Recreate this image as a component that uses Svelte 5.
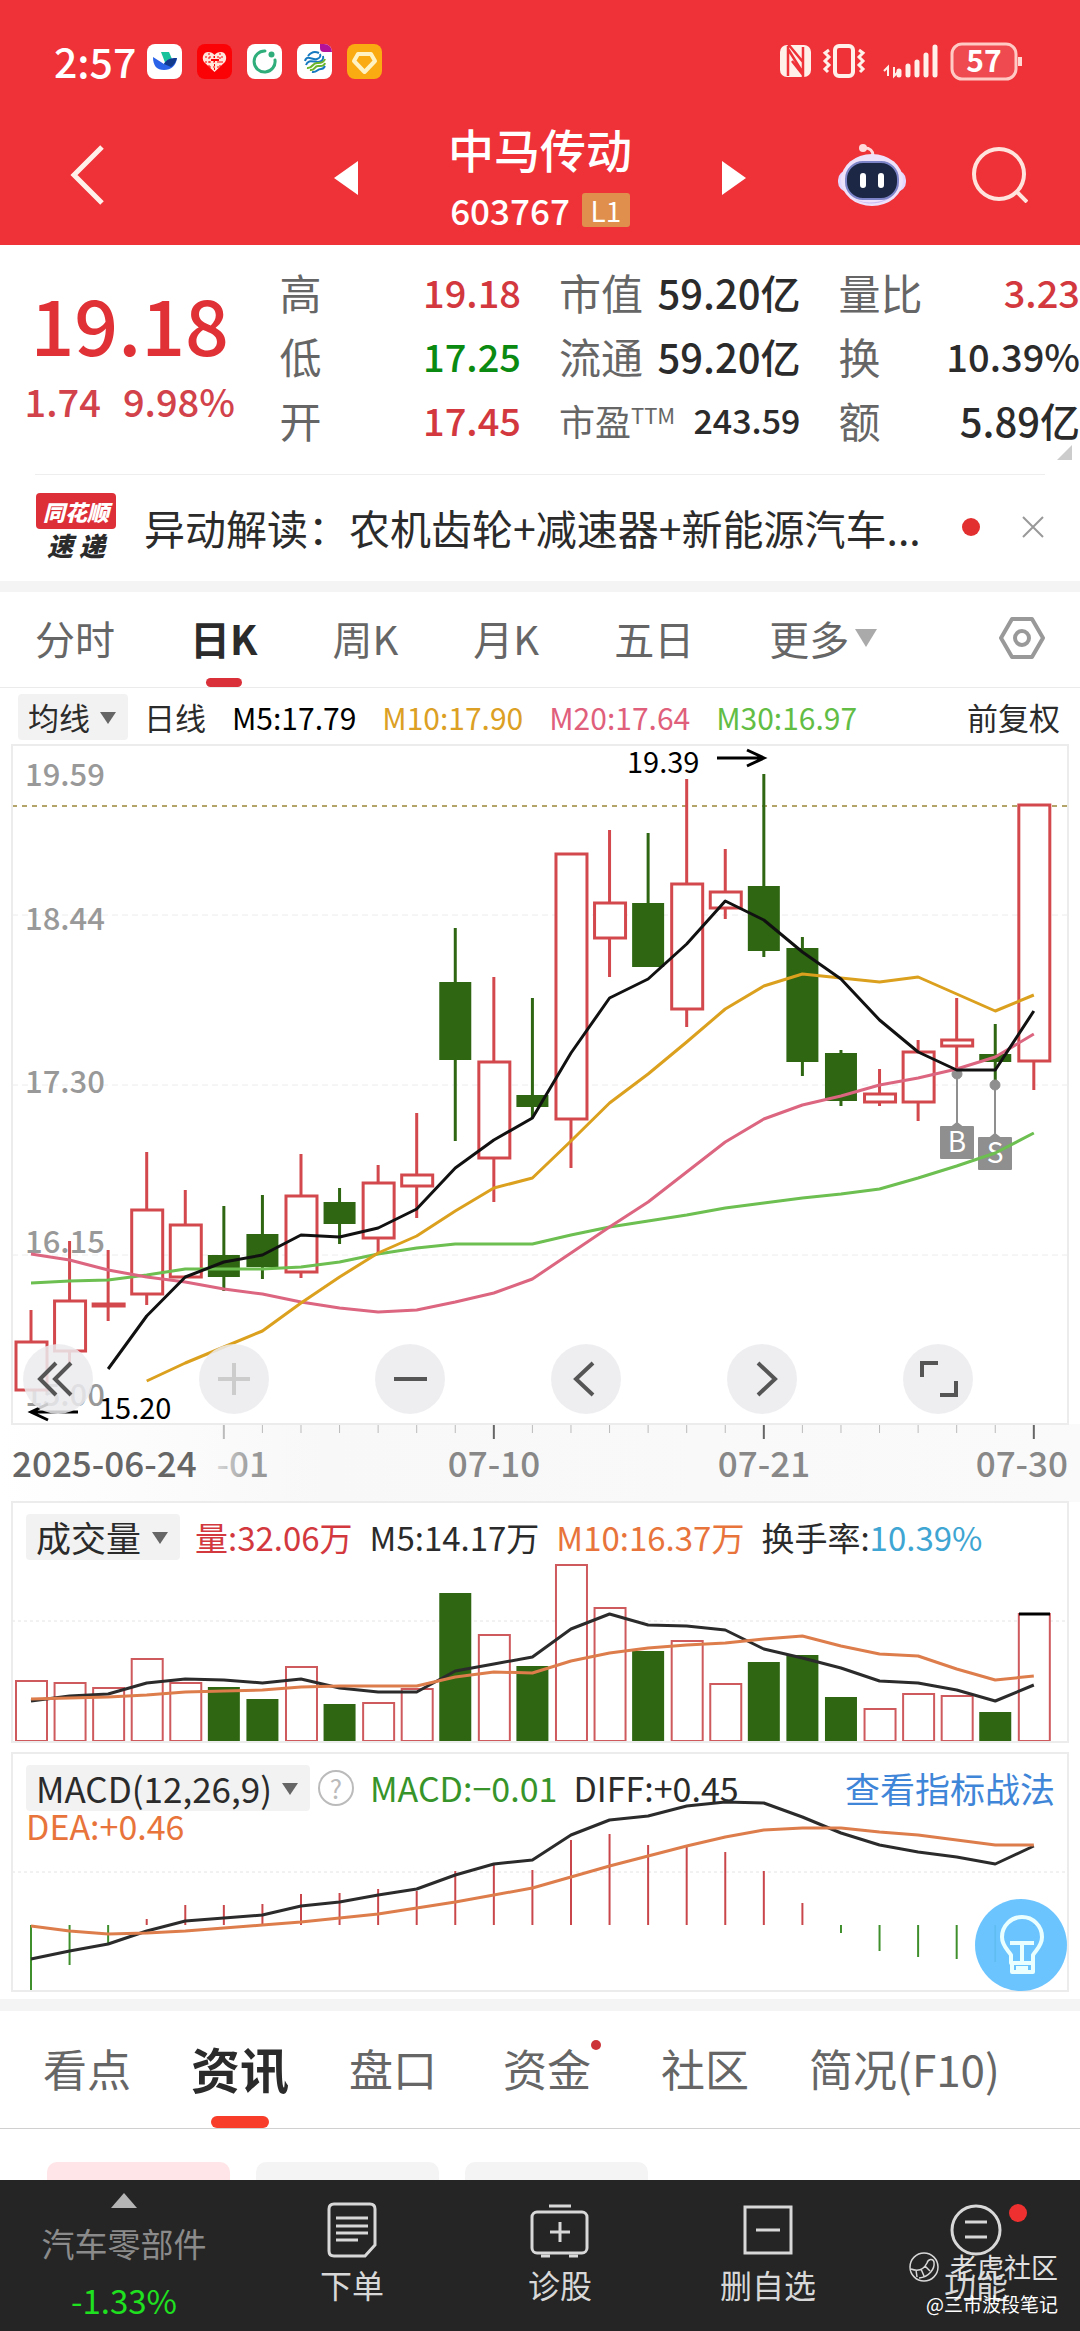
<script>
    const step = 38.57;
    const cx = (i) => 19 + i * step;

    // high, body top, body bottom, low, direction
    const candles = [
        [565, 597, 645, 645, 'up'],
        [496, 556, 606, 620, 'up'],
        [505, 559, 561, 576, 'up'],
        [407, 465, 549, 560, 'up'],
        [445, 480, 532, 532, 'up'],
        [461, 510, 532, 546, 'down'],
        [450, 489, 522, 534, 'down'],
        [409, 451, 527, 533, 'up'],
        [443, 457, 479, 499, 'down'],
        [420, 438, 493, 508, 'up'],
        [368, 430, 441, 473, 'up'],
        [183, 237, 315, 396, 'down'],
        [232, 317, 413, 457, 'up'],
        [253, 350, 362, 372, 'down'],
        [109, 109, 374, 423, 'up'],
        [85, 158, 193, 232, 'up'],
        [88, 158, 222, 222, 'down'],
        [34, 139, 264, 282, 'up'],
        [104, 147, 163, 174, 'up'],
        [29, 141, 206, 212, 'down'],
        [192, 203, 317, 331, 'down'],
        [305, 308, 356, 361, 'down'],
        [324, 349, 357, 361, 'up'],
        [295, 307, 357, 376, 'up'],
        [253, 295, 301, 323, 'up'],
        [279, 309, 317, 339, 'down'],
        [60, 60, 316, 345, 'up']
    ];
    const ma5 = [624, 571, 532, 517, 510, 490, 492, 483, 464, 423, 395, 373, 308, 253, 234, 199, 156, 175, 207, 234, 275, 307, 325, 325, 266];
    const ma10 = [636, 618, 602, 586, 558, 532, 508, 491, 466, 443, 433, 396, 358, 329, 297, 264, 241, 229, 233, 237, 232, 249, 266, 250];
    const ma20 = [509, 515, 525, 532, 537, 544, 549, 557, 563, 567, 565, 557, 548, 534, 508, 482, 457, 427, 397, 374, 360, 351, 340, 333, 324, 312, 289];
    const ma30 = [538, 536, 535, 530, 524, 524, 524, 522, 517, 509, 503, 499, 499, 499, 490, 482, 476, 470, 463, 458, 453, 449, 444, 433, 421, 408, 388];

    const volumes = [179, 181, 186, 157, 181, 185, 197, 165, 202, 201, 187, 91, 133, 164, 63, 106, 149, 139, 182, 160, 153, 195, 207, 192, 194, 210, 112];
    const vol5 = [199, 194, 192, 181, 177, 178, 181, 177, 186, 190, 190, 169, 162, 155, 127, 112, 123, 124, 128, 147, 156, 166, 179, 181, 188, 199, 183];
    const vol10 = [197, 196, 195, 193, 190, 189, 188, 185, 184, 184, 184, 175, 170, 171, 159, 151, 146, 143, 141, 137, 134, 144, 152, 154, 167, 178, 174];

    const macd = [238, 212, 190, 166, 152, 152, 151, 141, 140, 136, 138, 118, 111, 117, 87, 81, 92, 93, 99, 118, 150, 180, 198, 204, 206, 209, 173];
    const diff = [206, 198, 191, 178, 168, 165, 162, 153, 149, 142, 136, 122, 111, 107, 82, 67, 63, 53, 49, 50, 64, 80, 92, 99, 104, 111, 93];
    const dea = [173, 178, 181, 180, 178, 175, 172, 169, 165, 161, 155, 149, 142, 135, 124, 113, 103, 93, 84, 77, 75, 75, 79, 82, 87, 92, 92];

    const line = (values, from = 0) => values.map((y, i) => `${cx(i + from)},${y}`).join(' ');

    const priceLabels = [
        ['19.59', 41],
        ['18.44', 185],
        ['17.30', 348],
        ['16.15', 508],
        ['15.00', 661]
    ];
    const ticks = Array.from({ length: 22 }, (_, i) => i + 5);
    const columns = [
        [['高', '19.18', 'red'], ['低', '17.25', 'green'], ['开', '17.45', 'red']],
        [['市值', '59.20亿', 'wide'], ['流通', '59.20亿', 'wide'], ['市盈', '243.59', 'small']],
        [['量比', '3.23', 'red'], ['换', '10.39%', ''], ['额', '5.89亿', 'wide']]
    ];
    const periods = ['分时', '日K', '周K', '月K', '五日'];
    const sections = ['看点', '资讯', '盘口', '资金', '社区', '简况(F10)'];
    let period = $state('日K');
    let section = $state('资讯');
</script>

<div class="app">
    <header>
        <div class="status">
            <span class="time">2:57</span>
            <svg class="app-icon" viewBox="0 0 35 35">
                <rect width="35" height="35" rx="8" fill="#fff" />
                <path d="M14 8h8l3 7-6 6z" fill="#18c39b" />
                <path d="M6 13l11 7c2-4 6-6 13-6-1 8-6 12-13 12S6 22 6 13z" fill="#2a62e8" />
                <path d="M17 20c2-4 6-6 13-6-1 4-3 7-6 9z" fill="#123a8c" />
            </svg>
            <svg class="app-icon" viewBox="0 0 35 35">
                <rect width="35" height="35" rx="8" fill="#fb0206" />
                <path d="M17.500 28L7 18c-3-5 0-10 4-10 3 0 5 1 6.500 3 1.500-2 3.500-3 6.500-3 4 0 7 5 4 10z" fill="#ffe6dc" />
                <path d="M8 13h19M8 18h19M12 23h11M12 9v15M23 9v15M17.500 12v14" stroke="#fb0206" stroke-width="1" stroke-dasharray="2 2" />
                <path d="M14 16h8" stroke="#fb0206" stroke-width="2" />
            </svg>
            <svg class="app-icon" viewBox="0 0 35 35">
                <rect width="35" height="35" rx="8" fill="#fff" />
                <path d="M18 7a10.500 10.500 0 1 0 10 9" fill="none" stroke="#2fae7c" stroke-width="3" stroke-linecap="round" />
                <circle cx="24.500" cy="10.500" r="3" fill="#2fae7c" />
            </svg>
            <svg class="app-icon" viewBox="0 0 35 35">
                <rect width="35" height="35" rx="8" fill="#fff" />
                <path d="M23 0h4a8 8 0 0 1 8 8h-8a4 4 0 0 1-4-4z" fill="#b5129a" />
                <g fill="none" stroke-width="2">
                    <path d="M11 12c3-4 7-5 11-3M8 17c2-7 8 0 12-2 3-1 4-3 3-5M26 12c1 3-1 6-5 6-5 0-10-3-12 3" stroke="#1679c0" />
                    <path d="M10 24c6 1 5-6 11-5 3 0 6-1 7-4M28 19c-1 4-4 3-7 3-4 0-3 5-8 4" stroke="#6bb52c" />
                    <path d="M15 28c5 1 5-3 9-3 2 0 3-1 4-3" stroke="#1679c0" />
                </g>
            </svg>
            <svg class="app-icon" viewBox="0 0 35 35">
                <rect width="35" height="35" rx="8" fill="#fbab12" />
                <path d="M11 10h13l4 7-10.500 11L7 17z" fill="none" stroke="#fff3c4" stroke-width="4" stroke-linejoin="round" />
            </svg>
            <svg class="signals" viewBox="0 0 250 40">
                <rect x="10" y="3" width="31" height="32" rx="7" fill="#fff0ea" />
                <path d="M18 4v30M33 5v30M18 7l15 24M22 19l11 14M18 2l15 18" stroke="#ee3238" stroke-width="2.500" fill="none" />
                <g fill="none" stroke="#fff0ea" stroke-width="3">
                    <rect x="65" y="4" width="18" height="30" rx="4" stroke-width="4" />
                    <path d="M59 8l-4 3 4 4-4 4 4 4-4 4 3 3M89 8l4 3-4 4 4 4-4 4 4 4-3 3" />
                    <path d="M118 34V25l-4 4M124 25v9l4-4" stroke-width="2" />
                </g>
                <g stroke="#fff0ea" stroke-width="5" stroke-linecap="round">
                    <path d="M129 29v4M138 24v9M147 20v13M156 13v20M165 5v28" />
                </g>
                <rect x="182" y="2" width="64" height="35" rx="10" fill="#ef4a50" stroke="#ffc9c4" stroke-width="3" />
                <path d="M250 15v9" stroke="#ffd9d4" stroke-width="4" />
                <text x="214" y="30" text-anchor="middle" font-size="30" font-weight="700" fill="#fff">57</text>
            </svg>
        </div>
        <div class="title-bar">
            <button class="back" aria-label="返回">
                <svg width="36" height="62" viewBox="0 0 36 62"><path d="M32 3L4 31l28 28" fill="none" stroke="#fff0ea" stroke-width="5" /></svg>
            </button>
            <div class="stock">
                <button aria-label="上一只"><svg width="24" height="34" viewBox="0 0 24 34"><path d="M0 17L24 0v34z" fill="#fff" /></svg></button>
                <div class="name">
                    <h1>中马传动</h1>
                    <p>603767 <span class="level">L1</span></p>
                </div>
                <button aria-label="下一只"><svg width="24" height="34" viewBox="0 0 24 34"><path d="M24 17L0 0v34z" fill="#fff" /></svg></button>
            </div>
            <div class="tools">
                <button aria-label="助手">
                    <svg width="68" height="62" viewBox="0 0 68 62">
                        <circle cx="25" cy="4" r="4" fill="#ffd9dc" />
                        <path d="M26 4c6 0 9 2 9 8" fill="none" stroke="#ffd9dc" stroke-width="3" />
                        <rect x="0" y="26" width="68" height="22" rx="10" fill="#e3d6ff" />
                        <ellipse cx="34" cy="36" rx="31" ry="26" fill="#eee2fb" />
                        <path d="M10 50c14 14 38 12 48-2-10 12-36 15-48 2z" fill="#c9bdf5" />
                        <rect x="8" y="18" width="52" height="37" rx="17" fill="#1c2745" stroke="#7d85c8" stroke-width="2" />
                        <path d="M25 32v9M43 32v9" stroke="#fff" stroke-width="6" stroke-linecap="round" />
                    </svg>
                </button>
                <button aria-label="搜索">
                    <svg width="56" height="56" viewBox="0 0 56 56"><circle cx="27" cy="27" r="25" fill="none" stroke="#ffe4de" stroke-width="4" /><path d="M44 44l11 11" stroke="#ffe4de" stroke-width="4" /></svg>
                </button>
            </div>
        </div>
    </header>

    <section class="quote">
        <div class="price">
            <strong>19.18</strong>
            <p><span>1.74</span><span>9.98%</span></p>
        </div>
        {#each columns as column}
            <dl>
                {#each column as [label, value, tone]}
                    <div>
                        <dt class={tone}>{label}{#if tone == 'small'}<sup>TTM</sup>{/if}</dt>
                        <dd class={tone}>{value}</dd>
                    </div>
                {/each}
            </dl>
        {/each}
        <span class="corner"></span>
    </section>

    <section class="news">
        <div class="news-logo">
            <span class="logo-top">同花顺</span>
            <span class="logo-bottom">速 递</span>
        </div>
        <a href="#news">异动解读：农机齿轮+减速器+新能源汽车...</a>
        <span class="news-dot"></span>
        <button aria-label="关闭">
            <svg width="24" height="24" viewBox="0 0 24 24"><path d="M2 2l20 20M22 2L2 22" stroke="#999" stroke-width="2" /></svg>
        </button>
    </section>

    <nav class="periods">
        {#each periods as item}
            <button class:active={period == item} onclick={() => (period = item)}>{item}</button>
        {/each}
        <button class="more">更多<span class="caret"></span></button>
        <button class="setting" aria-label="设置">
            <svg width="46" height="44" viewBox="0 0 46 44">
                <path d="M13 3h20l11 19-11 19H13L2 22z" fill="none" stroke="#999" stroke-width="4" stroke-linejoin="round" />
                <circle cx="23" cy="22" r="7" fill="none" stroke="#999" stroke-width="4" />
            </svg>
        </button>
    </nav>

    <div class="averages">
        <span class="picker"><select aria-label="指标"><option>均线</option></select></span>
        <span class="kind">日线</span>
        <span class="m5">M5:17.79</span>
        <span class="m10">M10:17.90</span>
        <span class="m20">M20:17.64</span>
        <span class="m30">M30:16.97</span>
        <span class="adjust">前复权</span>
    </div>

    <section class="box">
        <svg class="plot" viewBox="0 0 1056 679">
            <g stroke="#ececec" stroke-width="1" stroke-dasharray="6 4">
                <path d="M0 170H1056M0 340H1056M0 510H1056" />
            </g>
            <path d="M0 61H1056" stroke="#b3a56a" stroke-width="2" stroke-dasharray="5 5" />
            <g fill="#999" font-size="31" font-weight="500">
                {#each priceLabels as [text, y]}
                    <text x="13" {y}>{text}</text>
                {/each}
            </g>
            {#each candles as [high, top, bottom, low, dir], i}
                {#if dir == 'up'}
                    <path d="M{cx(i)} {high}V{top}M{cx(i)} {bottom}V{low}" stroke="#d2484c" stroke-width="3" />
                    <rect x={cx(i) - 15} y={top} width="31" height={bottom - top} fill="#fff" stroke="#d2484c" stroke-width="3" />
                {:else}
                    <path d="M{cx(i)} {high}V{low}" stroke="#2e6612" stroke-width="3" />
                    <rect x={cx(i) - 16} y={top} width="32" height={bottom - top} fill="#2e6612" />
                {/if}
            {/each}
            <g fill="#8f8f8f" stroke="#8f8f8f">
                <path d="M945 329V382M983 340V392" stroke-width="2" />
                <circle cx="945" cy="329" r="5" />
                <circle cx="983" cy="340" r="5" />
                <path d="M929 382h11l5-4 5 4h11v31h-32zM967 393h11l5-4 5 4h11v31h-32z" stroke-width="2" stroke-linejoin="round" />
            </g>
            <g fill="#fff" font-size="28" text-anchor="middle">
                <text x="945" y="407">B</text>
                <text x="983" y="418">S</text>
            </g>
            <g fill="none" stroke-width="3" stroke-linejoin="round">
                <polyline points={line(ma30)} stroke="#6cbf50" />
                <polyline points={line(ma20)} stroke="#dc6580" />
                <polyline points={line(ma10, 3)} stroke="#dba01e" />
                <polyline points={line(ma5, 2)} stroke="#111" />
            </g>
            <g fill="none" stroke="#000" stroke-width="3">
                <path d="M705 13H751M735 5L752 13 735 21" />
                <path d="M66 667H20M36 659L19 667 36 675" />
            </g>
            <g fill="#000" font-size="29">
                <text x="615" y="28">19.39</text>
                <text x="87" y="674">15.20</text>
            </g>
        </svg>
        <div class="controls">
            <button aria-label="最早"><svg viewBox="0 0 70 70"><path d="M33 19L17 35l16 16M48 19L32 35l16 16" /></svg></button>
            <button class="faint" aria-label="放大"><svg viewBox="0 0 70 70"><path d="M19 35h32M35 19v32" /></svg></button>
            <button aria-label="缩小"><svg viewBox="0 0 70 70"><path d="M19 35h33" stroke-width="4" /></svg></button>
            <button aria-label="左移"><svg viewBox="0 0 70 70"><path d="M42 19L25 35l17 16" /></svg></button>
            <button aria-label="右移"><svg viewBox="0 0 70 70"><path d="M31 19l17 16-17 16" /></svg></button>
            <button aria-label="全屏"><svg viewBox="0 0 70 70"><path d="M19 33V19h16M53 37v14H37" /></svg></button>
        </div>
    </section>
    <svg class="dates" viewBox="0 0 1056 78">
        <defs>
            <linearGradient id="fade" gradientUnits="userSpaceOnUse" x1="186" y1="0" x2="240" y2="0">
                <stop offset="0" stop-color="#999" stop-opacity="0" />
                <stop offset="1" stop-color="#999" />
            </linearGradient>
        </defs>
        {#each ticks as i}
            <path d="M{cx(i)} 0v{i % 7 == 5 ? 15 : 9}" stroke={i % 7 == 5 && i > 5 ? '#666' : '#bbb'} stroke-width={i % 7 == 5 ? 2 : 1} />
        {/each}
        <g font-size="35" font-weight="500" fill="#888">
            <text x="0" y="53" fill="#666">2025-06-24</text>
            <text x="257" y="53" text-anchor="end" fill="url(#fade)">-01</text>
            <text x="482" y="53" text-anchor="middle">07-10</text>
            <text x="752" y="53" text-anchor="middle">07-21</text>
            <text x="1056" y="53" text-anchor="end">07-30</text>
        </g>
    </svg>

    <section class="box volume">
        <svg class="plot" viewBox="0 0 1056 240">
            <path d="M0 119H1056" stroke="#e4e4e4" stroke-dasharray="3 3" />
            {#each volumes as top, i}
                {#if candles[i][4] == 'up'}
                    <rect x={cx(i) - 15} y={top} width="31" height={239 - top} fill="#fff" stroke="#cf5a5e" stroke-width="2" />
                {:else}
                    <rect x={cx(i) - 16} y={top} width="32" height={240 - top} fill="#2e6612" />
                {/if}
            {/each}
            <path d="M1007 112h31" stroke="#000" stroke-width="3" />
            <g fill="none" stroke-width="3" stroke-linejoin="round">
                <polyline points={line(vol5)} stroke="#2b2b2b" />
                <polyline points={line(vol10)} stroke="#dd7d4c" />
            </g>
        </svg>
        <div class="legend">
            <span class="picker"><select aria-label="副图一"><option>成交量</option></select></span>
            <span class="red">量:32.06万</span>
            <span>M5:14.17万</span>
            <span class="orange">M10:16.37万</span>
            <span>换手率:<span class="cyan">10.39%</span></span>
        </div>
    </section>

    <section class="box macd">
        <svg class="plot" viewBox="0 0 1056 238">
            <path d="M0 119H1056" stroke="#e4e4e4" stroke-dasharray="3 3" />
            {#each macd as end, i}
                <path d="M{cx(i)} 172V{end}" stroke={end > 172 ? '#3f8f2c' : '#c9474b'} stroke-width="2" />
            {/each}
            <g fill="none" stroke-width="3" stroke-linejoin="round">
                <polyline points={line(diff)} stroke="#2b2b2b" />
                <polyline points={line(dea)} stroke="#dd7d4c" />
            </g>
        </svg>
        <div class="legend">
            <span class="picker"><select aria-label="副图二"><option>MACD(12,26,9)</option></select></span>
            <button class="help">?</button>
            <span class="green">MACD:−0.01</span>
            <span>DIFF:+0.45</span>
            <a href="#guide">查看指标战法</a>
            <span class="dea">DEA:+0.46</span>
        </div>
        <button class="bulb" aria-label="提示">
            <svg viewBox="0 0 92 92">
                <g fill="none" stroke="#eaffff" stroke-width="4" stroke-linejoin="round">
                    <path d="M36 64v-8c-3-5-9-9-9-18a20 20 0 0 1 40 0c0 9-6 13-9 18v8z" />
                    <path d="M35 44h24M47 44v20M37 64v9h21v-9M41 69h12" />
                </g>
            </svg>
        </button>
    </section>

    <nav class="sections">
        {#each sections as item}
            <button class:active={section == item} class:fresh={item == '资金'} onclick={() => (section = item)}>{item}</button>
        {/each}
    </nav>
    <div class="chips"><span></span><span></span><span></span></div>

    <footer>
        <button class="sector">
            <span class="up"></span>
            <span>汽车零部件</span>
            <span class="change">-1.33%</span>
        </button>
        <button>
            <svg width="60" height="56" viewBox="0 0 60 56">
                <path d="M12 2h36q5 0 5 5v36L43 54H12q-5 0-5-5V7q0-5 5-5z" />
                <path d="M14 16h32M14 24h32M14 31h32M14 38h22" />
            </svg>
            <span>下单</span>
        </button>
        <button>
            <svg width="60" height="56" viewBox="0 0 60 56">
                <rect x="2" y="10" width="55" height="41" rx="5" />
                <path d="M19 4h22M11 54h9M39 54h9M30 20v20M20 30h20" />
            </svg>
            <span>诊股</span>
        </button>
        <button>
            <svg width="60" height="56" viewBox="0 0 60 56">
                <rect x="7" y="5" width="46" height="46" />
                <path d="M18 28h24" />
            </svg>
            <span>删自选</span>
        </button>
        <button class="feature">
            <svg width="60" height="56" viewBox="0 0 60 56">
                <circle cx="30" cy="28" r="24" />
                <path d="M19 20h22M19 35h22" />
            </svg>
            <span>功能</span>
        </button>
        <div class="mark">
            <p>
                <svg width="32" height="32" viewBox="0 0 32 32">
                    <circle cx="16" cy="16" r="14" />
                    <path d="M3 18c8 3 13 0 16-6 1-4 6-5 7-1 1 7-5 15-15 16M8 19l1 7M13 18l3 7M17 15l5 5" />
                </svg>
                老虎社区
            </p>
            <small>@三市波段笔记</small>
        </div>
    </footer>
</div>

<style>
    :global(body) {
        background: #fff;
    }

    .app {
        font-family: 'Noto Sans CJK SC', sans-serif;
        color: #2b2b2b;
        overflow: hidden;
    }

    button,
    select {
        border: 0;
        padding: 0;
        margin: 0;
        background: none;
        font: inherit;
        color: inherit;
    }

    svg {
        display: block;
    }

    h1,
    p,
    dl,
    dd {
        margin: 0;
    }

    a {
        color: inherit;
        text-decoration: none;
    }

    header {
        background: #ee3238;
        color: #fff;
    }

    .status {
        display: flex;
        align-items: center;
        gap: 15px;
        height: 99px;
        padding: 24px 60px 0 54px;
        box-sizing: border-box;
    }

    .time {
        font-size: 41px;
        font-weight: 500;
        line-height: 40px;
        margin-right: -4px;
        padding-bottom: 4px;
    }

    .app-icon {
        width: 35px;
        height: 35px;
    }

    .signals {
        width: 250px;
        height: 40px;
        margin-left: auto;
        overflow: visible;
    }

    .title-bar {
        display: grid;
        grid-template-columns: 1fr auto 1fr;
        align-items: center;
        height: 146px;
        padding: 6px 52px 0 70px;
        box-sizing: border-box;
    }

    .stock {
        display: flex;
        align-items: center;
        justify-content: center;
        gap: 90px;
        padding-top: 6px;
        margin-right: 18px;
    }

    .name {
        text-align: center;
    }

    h1 {
        font-size: 46px;
        font-weight: 500;
        line-height: 64px;
        white-space: nowrap;
    }

    .name p {
        display: flex;
        align-items: center;
        justify-content: center;
        gap: 12px;
        font-size: 35px;
        font-weight: 500;
        line-height: 60px;
    }

    .level {
        width: 48px;
        background: #e0904c;
        border-radius: 3px;
        font-size: 28px;
        font-weight: 400;
        line-height: 34px;
    }

    .tools {
        display: flex;
        align-items: center;
        justify-content: flex-end;
        gap: 66px;
    }

    .quote {
        position: relative;
        display: grid;
        grid-template-columns: repeat(4, 1fr);
        gap: 38px;
        padding: 15px 0 22px;
    }

    .price {
        padding: 24px 0 0 18px;
        text-align: center;
        color: #e03236;
    }

    .price strong {
        display: block;
        font-size: 77px;
        font-weight: 500;
        line-height: 78px;
    }

    .price p {
        display: flex;
        justify-content: center;
        gap: 22px;
        font-size: 38px;
        font-weight: 500;
        line-height: 78px;
        color: #d2424a;
    }

    dl div {
        display: flex;
        justify-content: space-between;
        height: 64px;
        line-height: 64px;
        white-space: nowrap;
    }

    dt {
        font-size: 42px;
        color: #666;
    }

    dt.small {
        font-size: 36px;
    }

    sup {
        font-size: 22px;
        line-height: 20px;
        vertical-align: 12px;
    }

    dd {
        font-size: 38px;
        font-weight: 500;
    }

    dd.wide {
        font-size: 40px;
    }

    dd.small {
        font-size: 34px;
    }

    .red {
        color: #d2383e;
    }

    dt.red,
    dt.green {
        color: #666;
    }

    .green {
        color: #0a8a10;
    }

    .corner {
        position: absolute;
        right: 8px;
        bottom: 14px;
        border-left: 15px solid transparent;
        border-bottom: 15px solid #ccc;
    }

    .news {
        display: flex;
        align-items: center;
        height: 107px;
        margin: 0 35px;
        padding-bottom: 2px;
        border-top: 1px solid #eee;
        box-sizing: border-box;
    }

    .news-logo {
        display: flex;
        flex-direction: column;
        align-items: center;
        width: 82px;
        margin-right: 27px;
        white-space: nowrap;
        font-weight: 900;
        font-style: italic;
    }

    .logo-top {
        width: 80px;
        border-radius: 4px;
        background: #dd2f38;
        color: #fff;
        text-align: center;
        font-size: 22px;
        line-height: 36px;
    }

    .logo-bottom {
        font-size: 26px;
        line-height: 32px;
    }

    .news a {
        font-size: 41px;
        line-height: 60px;
        white-space: nowrap;
    }

    .news-dot {
        width: 18px;
        height: 18px;
        margin: 0 auto;
        border-radius: 50%;
        background: #e23030;
    }

    .periods {
        display: flex;
        gap: 75px;
        height: 107px;
        padding: 0 35px;
        border-top: 11px solid #f4f4f4;
        border-bottom: 1px solid #ebebeb;
        box-sizing: border-box;
        font-size: 40px;
        color: #666;
    }

    .periods button,
    .sections button {
        position: relative;
        display: flex;
        align-items: center;
        padding-bottom: 4px;
        white-space: nowrap;
    }

    .periods .active,
    .sections .active {
        color: #2b2b2b;
        font-weight: 700;
    }

    .active::after {
        content: '';
        position: absolute;
        left: 50%;
        bottom: 0;
        transform: translateX(-50%);
        width: 36px;
        height: 9px;
        border-radius: 5px;
        background: #d9303a;
    }

    .caret {
        margin-left: 6px;
        border: 11px solid transparent;
        border-top: 18px solid #aaa;
        border-bottom: 0;
    }

    .periods .setting {
        margin-left: auto;
    }

    .averages {
        display: flex;
        align-items: center;
        gap: 26px;
        height: 57px;
        padding: 0 20px 0 18px;
        font-size: 30px;
        white-space: nowrap;
    }

    .picker {
        position: relative;
        background: #f2f2f2;
        border-radius: 4px;
    }

    .picker::after {
        content: '';
        position: absolute;
        right: 12px;
        top: 18px;
        border: 8px solid transparent;
        border-top: 12px solid #666;
        border-bottom: 0;
    }

    select {
        display: block;
        appearance: none;
        height: 46px;
        padding: 0 38px 0 10px;
        line-height: 46px;
    }

    .averages select,
    .kind,
    .adjust {
        font-size: 31px;
    }

    .kind {
        margin-left: -10px;
    }

    .m5 {
        color: #000;
    }

    .m10 {
        color: #dca024;
    }

    .m20 {
        color: #e0607c;
    }

    .m30 {
        color: #62bd45;
    }

    .adjust {
        margin-left: auto;
    }

    .box {
        position: relative;
        display: grid;
        margin: 0 12px;
        outline: 2px solid #ececec;
        outline-offset: -1px;
    }

    .plot,
    .legend {
        grid-area: 1 / 1;
    }

    .plot,
    .dates {
        width: 100%;
    }

    .dates {
        box-sizing: border-box;
        padding: 0 12px;
        background: linear-gradient(90deg, #fff, #f8f8f8 30%, #fafafa);
    }

    .controls {
        position: absolute;
        left: 1%;
        right: 9%;
        bottom: 10px;
        display: flex;
        justify-content: space-between;
    }

    .controls button {
        width: 70px;
        height: 70px;
        border-radius: 50%;
        background: rgba(235, 235, 238, 0.85);
    }

    .controls path {
        fill: none;
        stroke: #555;
        stroke-width: 4;
    }

    .controls .faint path {
        stroke: #ccc;
    }

    .legend {
        display: flex;
        flex-wrap: wrap;
        align-items: center;
        align-content: flex-start;
        gap: 0 17px;
        padding: 12px 13px 0 14px;
        font-size: 33px;
        line-height: 46px;
        z-index: 1;
    }

    .volume select {
        font-size: 35px;
    }

    .volume .red {
        margin-left: -2px;
    }

    .orange,
    .dea {
        color: #e8743b;
    }

    .cyan {
        color: #3fa5d2;
    }

    .macd {
        margin-top: 11px;
    }

    .macd .legend {
        gap: 0 16px;
        font-size: 35px;
        line-height: 30px;
    }

    .macd .legend > span {
        font-size: 34px;
    }

    .macd .picker select {
        font-size: 35px;
    }

    .macd .green {
        color: #37942a;
    }

    .help {
        width: 36px;
        height: 36px;
        margin-left: -8px;
        border: 2px solid #bbb;
        border-radius: 50%;
        font-size: 26px;
        line-height: 32px;
        color: #bbb;
    }

    .legend a {
        margin-left: auto;
        color: #3f86d8;
    }

    .dea {
        width: 100%;
    }

    .bulb {
        position: absolute;
        right: 1px;
        bottom: 0;
        width: 92px;
        height: 92px;
        border-radius: 50%;
        background: rgba(99, 192, 255, 0.94);
        z-index: 2;
    }

    .sections {
        display: flex;
        gap: 60px;
        height: 130px;
        margin-top: 8px;
        padding: 0 43px;
        border-top: 12px solid #f4f4f4;
        border-bottom: 1px solid #d0d0d0;
        box-sizing: border-box;
        font-size: 44px;
        color: #666;
    }

    .sections .active {
        font-size: 49px;
    }

    .sections .active::after {
        width: 58px;
        height: 12px;
        border-radius: 6px;
        background: #f83d2a;
    }

    .sections .fresh {
        padding: 0 10px 4px 6px;
    }

    .fresh::before {
        content: '';
        position: absolute;
        top: 29px;
        right: 0;
        width: 10px;
        height: 10px;
        border-radius: 50%;
        background: #cc3338;
    }

    .chips {
        display: flex;
        gap: 26px;
        height: 18px;
        padding: 33px 47px 0;
    }

    .chips span {
        width: 183px;
        background: #f4f4f4;
        border-radius: 10px 10px 0 0;
    }

    .chips span:first-child {
        background: #ffe5e7;
    }

    footer {
        position: relative;
        display: grid;
        grid-template-columns: 248fr repeat(4, 208fr);
        height: 151px;
        background: #252525;
        color: #d8d8d8;
        font-size: 32px;
        line-height: 44px;
    }

    footer button {
        display: flex;
        flex-direction: column;
        align-items: center;
        gap: 4px;
        padding-top: 22px;
    }

    footer svg {
        fill: none;
        stroke: #d8d8d8;
        stroke-width: 3;
    }

    .sector {
        color: #8b8b8b;
        font-size: 33px;
        gap: 13px;
        padding-top: 13px;
    }

    .change {
        color: #1fe11f;
    }

    .up {
        border: 13px solid transparent;
        border-top: 0;
        border-bottom: 15px solid #b5b5b5;
    }

    .feature {
        position: relative;
    }

    .feature::after {
        content: '';
        position: absolute;
        top: 24px;
        left: 137px;
        width: 18px;
        height: 18px;
        border-radius: 50%;
        background: #ee3030;
    }

    .mark {
        position: absolute;
        right: 22px;
        bottom: 12px;
        text-align: right;
        color: #e0e0e0;
    }

    .mark p {
        display: flex;
        align-items: center;
        gap: 10px;
        font-size: 27px;
        line-height: 44px;
    }

    .mark svg {
        stroke-width: 1.500;
    }

    .mark small {
        display: block;
        font-size: 19px;
        line-height: 30px;
        color: #fff;
    }
</style>
